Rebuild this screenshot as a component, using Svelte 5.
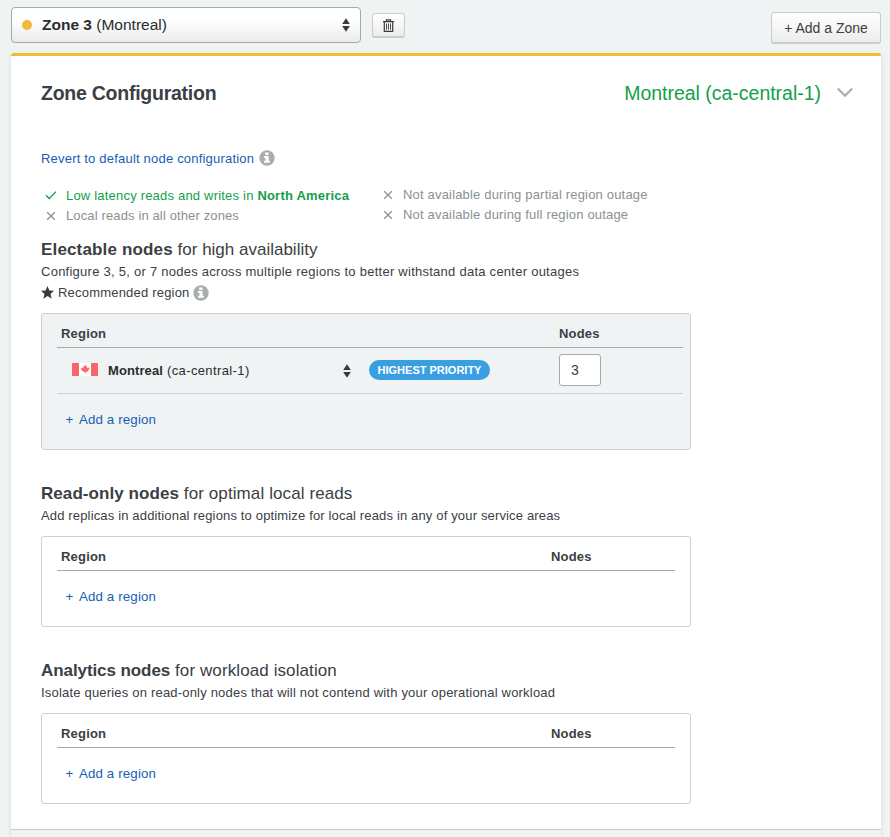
<script>
  const benefitsLeft = [
    { ok: true, text: 'Low latency reads and writes in ', strong: 'North America', spacing: 0.2 },
    { ok: false, text: 'Local reads in all other zones', spacing: 0.13 }
  ];
  const benefitsRight = [
    { ok: false, text: 'Not available during partial region outage', spacing: 0.18 },
    { ok: false, text: 'Not available during full region outage', spacing: 0.18 }
  ];
  const emptySections = [
    {
      name: 'Read-only nodes',
      purpose: 'for optimal local reads',
      help: 'Add replicas in additional regions to optimize for local reads in any of your service areas',
      nameSpacing: 0.07,
      helpSpacing: 0.155
    },
    {
      name: 'Analytics nodes',
      purpose: 'for workload isolation',
      help: 'Isolate queries on read-only nodes that will not contend with your operational workload',
      nameSpacing: -0.08,
      helpSpacing: 0.195
    }
  ];
</script>

{#snippet info()}
  <svg class="info" width="16" height="16" viewBox="0 0 16 16">
    <circle cx="8" cy="8" r="7.7" fill="#a9adae" />
    <path d="M6.2 2.4h3.3v2.6h-3.3zM5.1 6h4.5v4.7h1.3v2.1H5.1v-2.1h1.4V8.1H5.1z" fill="#fff" />
  </svg>
{/snippet}

{#snippet updown()}
  <svg width="8" height="14" viewBox="0 0 8 14">
    <path d="M4 0.3 7.8 6H0.2zM0.2 8h7.6L4 13.7z" fill="#363b3f" />
  </svg>
{/snippet}

{#snippet benefit(item)}
  <li class:ok={item.ok}>
    <svg class="mark" width="12" height="12" viewBox="0 0 12 12" fill="none" stroke="currentColor">
      {#if item.ok}
        <path d="M0.9 5.2 4.2 8.5 11 1.6" stroke-width="1.3" />
      {:else}
        <path d="M2.2 2.2 9.8 9.8M9.8 2.2 2.2 9.8" stroke-width="1.3" />
      {/if}
    </svg>
    <span style:letter-spacing="{item.spacing}px">{item.text}{#if item.strong}<b>{item.strong}</b>{/if}</span>
  </li>
{/snippet}

<div class="page">
  <div class="toolbar">
    <button class="zone-select">
      <span class="dot"></span>
      <span class="zone-name"><b>Zone 3</b> (Montreal)</span>
      {@render updown()}
    </button>
    <button class="trash" aria-label="Delete zone">
      <svg width="13" height="13" viewBox="0 0 13 13" fill="none" stroke="#363b3f">
        <path d="M1 2.6h11M4.4 2.4V0.9h4.2v1.5M2.3 3v9.3h8.4V3" stroke-width="1.2" />
        <path d="M4.5 4.5v6.2M6.5 4.5v6.2M8.5 4.5v6.2" stroke-width="0.9" />
      </svg>
    </button>
    <button class="add-zone">+ Add a Zone</button>
  </div>

  <main class="card">
    <header>
      <h1>Zone Configuration</h1>
      <span class="location">Montreal (ca-central-1)</span>
      <svg class="chevron" width="18" height="12" viewBox="0 0 18 12" fill="none">
        <path d="M1.8 1.5 9 8.7 16.2 1.5" stroke="#a9adae" stroke-width="2.2" />
      </svg>
    </header>

    <div class="revert"><a href="#revert">Revert to default node configuration</a>{@render info()}</div>

    <div class="benefits">
      <ul class="left">
        {#each benefitsLeft as item}{@render benefit(item)}{/each}
      </ul>
      <ul class="right">
        {#each benefitsRight as item}{@render benefit(item)}{/each}
      </ul>
    </div>

    <section class="electable">
      <h2><b>Electable nodes</b> for high availability</h2>
      <p>Configure 3, 5, or 7 nodes across multiple regions to better withstand data center outages</p>
      <div class="recommended">
        <svg width="13" height="13" viewBox="0 0 13 13">
          <path d="M6.5 0 8.4 4.4 13 4.8 9.5 7.9 10.7 12.7 6.5 10.1 2.3 12.7 3.5 7.9 0 4.8 4.6 4.4z" fill="#363b3f" />
        </svg>
        <span>Recommended region</span>{@render info()}
      </div>
      <div class="box filled">
        <div class="thead"><b>Region</b><b class="nodes">Nodes</b></div>
        <div class="row">
          <svg class="flag" width="26" height="13" viewBox="0 0 26 13">
            <path d="M0 0h26v13H0z" fill="#fff" />
            <path d="M0 0h7v13H0zM19 0h7v13h-7z" fill="#fc646c" />
            <path d="M13.2 1.6 14.3 3.7 15.3 3.1 15 5.5 16.6 4.4 17.6 6 16.2 7.6 14.8 9 13.6 8.8V10.8h-.8V8.8L11.6 9 10.2 7.6 8.8 6 9.8 4.4 11.4 5.5 11.1 3.1 12.1 3.7z" fill="#fc646c" />
          </svg>
          <span class="region-name"><b>Montreal</b> (ca-central-1)</span>
          {@render updown()}
          <span class="badge">HIGHEST PRIORITY</span>
          <input value="3" aria-label="Nodes" />
        </div>
        <a class="add" href="#add">+ <span>Add a region</span></a>
      </div>
    </section>

    {#each emptySections as s}
      <section>
        <h2 class="wide"><b style:letter-spacing="{s.nameSpacing}px">{s.name}</b> {s.purpose}</h2>
        <p style:letter-spacing="{s.helpSpacing}px">{s.help}</p>
        <div class="box">
          <div class="thead"><b>Region</b><b class="nodes">Nodes</b></div>
          <a class="add" href="#add">+ <span>Add a region</span></a>
        </div>
      </section>
    {/each}
  </main>
  <footer></footer>
</div>

<style>
  :global(body) {
    background: #eff3f4;
  }
  .page {
    box-sizing: border-box;
    height: 837px;
    padding: 7px 9px 0 11px;
    overflow: hidden;
    display: flex;
    flex-direction: column;
    background: #eff3f4;
    color: #3a4044;
    font: 13px/20px 'Liberation Sans', Arial, sans-serif;
    letter-spacing: 0.2px;
  }
  .page * {
    box-sizing: border-box;
  }
  .page > * {
    flex: none;
  }
  svg {
    display: block;
    flex: none;
  }
  h1, h2, p, ul {
    margin: 0;
    padding: 0;
    font-weight: normal;
  }
  a {
    color: #1660b4;
    text-decoration: none;
  }
  button {
    margin: 0;
    padding: 0;
    font: inherit;
    color: #3a4044;
    border: 1px solid #c9cdcf;
    border-bottom-width: 2px;
    border-radius: 3px;
    background: linear-gradient(#fff, #ececec);
  }
  .toolbar {
    display: flex;
    align-items: flex-start;
    height: 46px;
  }
  .zone-select {
    width: 350px;
    height: 36px;
    display: flex;
    align-items: center;
    padding: 0 10px;
    border: 1px solid #a5a9ab;
    border-radius: 4px;
    background: linear-gradient(#fff 35%, #ebebeb);
    font-size: 15.5px;
    letter-spacing: 0;
    color: #2a2d2f;
  }
  .dot {
    width: 10px;
    height: 10px;
    border-radius: 50%;
    background: #f4b936;
    margin-right: 10px;
  }
  .zone-name {
    flex: 1;
    text-align: left;
  }
  .trash {
    width: 33px;
    height: 25px;
    margin: 6px 0 0 11px;
    display: flex;
    align-items: center;
    justify-content: center;
  }
  .add-zone {
    width: 110px;
    height: 32px;
    margin: 5px 0 0 auto;
    padding-top: 1px;
    font-size: 14px;
    letter-spacing: 0;
  }
  .card {
    height: 776px;
    padding: 0 30px;
    border-top: 3px solid #f4b936;
    border-radius: 3px 3px 0 0;
    background: #fff;
    box-shadow: 0 2px 5px rgba(0, 20, 30, 0.1);
  }
  footer {
    height: 20px;
    border-top: 1px solid #c7cdce;
    position: relative;
    background: #eff3f4;
    box-shadow: 0 2px 5px rgba(0, 20, 30, 0.1);
  }
  header {
    display: flex;
    align-items: center;
    height: 24px;
    margin-top: 25px;
  }
  h1 {
    font-size: 19.5px;
    font-weight: bold;
    letter-spacing: -0.25px;
    flex: 1;
  }
  .location {
    font-size: 19.5px;
    letter-spacing: -0.02px;
    color: #13a049;
  }
  .chevron {
    margin: 0 -3px 0 15px;
  }
  .revert {
    display: flex;
    align-items: center;
    margin-top: 44px;
  }
  .info {
    margin: -2px 0 0 5px;
  }
  .benefits {
    display: flex;
    margin-top: 17px;
    height: 40px;
  }
  .left {
    width: 337px;
  }
  .right {
    margin-top: -1px;
  }
  li {
    list-style: none;
    display: flex;
    align-items: center;
    height: 20px;
    padding-left: 4px;
    color: #8b9092;
  }
  li.ok {
    color: #13a049;
  }
  li b {
    letter-spacing: 0.2px;
  }
  .mark {
    margin-right: 9px;
  }
  section {
    margin-top: 32px;
  }
  .electable {
    margin-top: 12px;
  }
  .electable p {
    letter-spacing: 0.255px;
  }
  h2 {
    font-size: 17px;
    line-height: 24px;
    letter-spacing: 0;
  }
  h2 b {
    letter-spacing: 0.16px;
  }
  .wide {
    letter-spacing: 0.1px;
  }
  .recommended {
    display: flex;
    align-items: center;
    height: 21px;
  }
  .recommended > svg:first-child {
    margin-top: -1px;
  }
  .recommended > svg:last-child {
    margin-top: 0;
  }
  .recommended span {
    margin: 0 -2px 0 4px;
  }
  .box {
    width: 650px;
    height: 91px;
    margin-top: 10px;
    padding: 0 15px;
    border: 1px solid #cdd1d3;
    border-radius: 3px;
  }
  .filled {
    height: 137px;
    padding-right: 7px;
    background: #eff3f4;
  }
  .thead {
    display: flex;
    height: 34px;
    padding: 10px 0 0 4px;
    border-bottom: 1px solid #a5a9ab;
  }
  .nodes {
    margin-left: auto;
    width: 124px;
  }
  .row {
    display: flex;
    align-items: center;
    height: 46px;
    padding-left: 15px;
    border-bottom: 1px solid #cdd1d3;
    color: #2a2d2f;
  }
  .flag {
    margin-top: -2px;
  }
  .region-name {
    width: 235px;
    margin-left: 10px;
    letter-spacing: 0.38px;
  }
  .region-name b {
    letter-spacing: 0.1px;
  }
  .badge {
    width: 121px;
    height: 20px;
    margin: -1px 0 0 18px;
    border-radius: 10px;
    background: #3a9fe2;
    color: #fff;
    font-size: 11px;
    font-weight: bold;
    letter-spacing: 0;
    text-align: center;
  }
  input {
    width: 42px;
    height: 32px;
    margin-left: 69px;
    margin-top: -1px;
    padding: 0 0 1px 11px;
    border: 1px solid #a5a9ab;
    border-radius: 3px;
    background: #fff;
    color: #3a4044;
    font: 14px 'Liberation Sans', Arial, sans-serif;
  }
  .add {
    display: inline-block;
    margin: 16px 0 0 8.5px;
    font-size: 13.3px;
  }
  .add span {
    margin-left: 1.5px;
    letter-spacing: 0.15px;
  }
</style>
